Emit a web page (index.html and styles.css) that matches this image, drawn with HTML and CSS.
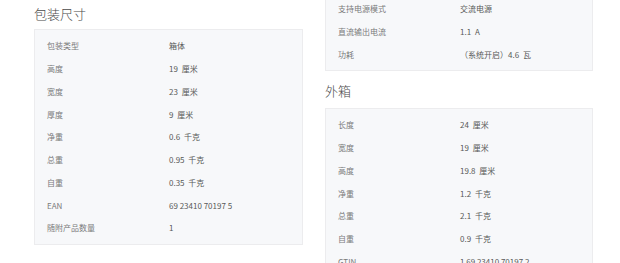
FILE: index.html
```html
<!DOCTYPE html>
<html lang="zh">
<head>
<meta charset="utf-8">
<link rel="stylesheet" href="styles.css">
</head>
<body>
<div class="page">
  <div class="col">
    <h2 class="title">包装尺寸</h2>
    <div class="box">
      <div class="row"><span class="k">包装类型</span><span class="v">箱体</span></div>
      <div class="row"><span class="k">高度</span><span class="v">19 <span class="u">厘米</span></span></div>
      <div class="row"><span class="k">宽度</span><span class="v">23 <span class="u">厘米</span></span></div>
      <div class="row"><span class="k">厚度</span><span class="v">9 <span class="u">厘米</span></span></div>
      <div class="row"><span class="k">净重</span><span class="v">0.6 <span class="u">千克</span></span></div>
      <div class="row"><span class="k">总重</span><span class="v">0.95 <span class="u">千克</span></span></div>
      <div class="row"><span class="k">自重</span><span class="v">0.35 <span class="u">千克</span></span></div>
      <div class="row"><span class="k">EAN</span><span class="v">69 23410 70197 5</span></div>
      <div class="row"><span class="k">随附产品数量</span><span class="v">1</span></div>
    </div>
  </div>
  <div class="col col-right">
    <div class="box">
      <div class="row"><span class="k">交流输入电压</span><span class="v">100 - 240 <span class="u">V</span></span></div>
      <div class="row"><span class="k">支持电源模式</span><span class="v">交流电源</span></div>
      <div class="row"><span class="k">直流输出电流</span><span class="v">1.1 <span class="u">A</span></span></div>
      <div class="row"><span class="k">功耗</span><span class="v">（系统开启）4.6 <span class="u">瓦</span></span></div>
    </div>
    <h2 class="title title-gap">外箱</h2>
    <div class="box">
      <div class="row"><span class="k">长度</span><span class="v">24 <span class="u">厘米</span></span></div>
      <div class="row"><span class="k">宽度</span><span class="v">19 <span class="u">厘米</span></span></div>
      <div class="row"><span class="k">高度</span><span class="v">19.8 <span class="u">厘米</span></span></div>
      <div class="row"><span class="k">净重</span><span class="v">1.2 <span class="u">千克</span></span></div>
      <div class="row"><span class="k">总重</span><span class="v">2.1 <span class="u">千克</span></span></div>
      <div class="row"><span class="k">自重</span><span class="v">0.9 <span class="u">千克</span></span></div>
      <div class="row"><span class="k">GTIN</span><span class="v">1 69 23410 70197 2</span></div>
    </div>
  </div>
</div>
</body>
</html>
```
FILE: styles.css
```css
html, body {
  margin: 0;
  padding: 0;
  background: #ffffff;
  overflow: hidden;
}
body {
  font-family: "Noto Sans CJK SC", "Noto Sans", sans-serif;
  color: #555;
}
.page {
  display: grid;
  grid-template-columns: 269px 268px;
  column-gap: 22px;
  padding-left: 34px;
  align-items: start;
}
.col {
  display: flex;
  flex-direction: column;
}
.col-right {
  margin-top: -31px;
}
.title {
  margin: 0;
  font-weight: 300;
  font-size: 13px;
  line-height: 18px;
  color: #4a4a4a;
  padding-top: 5px;
  height: 24px;
}
.title-gap {
  margin-top: 6px;
  height: 26px;
}
.box {
  background: #f7f8fa;
  border: 1px solid #ececee;
  box-sizing: border-box;
  padding: 5px 0 4px 12px;
}
.row {
  display: grid;
  grid-template-columns: 122px 1fr;
  height: 22.75px;
  align-items: center;
  font-size: 8px;
  line-height: 12px;
}
.k {
  color: #7a7a7a;
}
.v {
  color: #585858;
}
.u {
  margin-left: 2px;
}
```
